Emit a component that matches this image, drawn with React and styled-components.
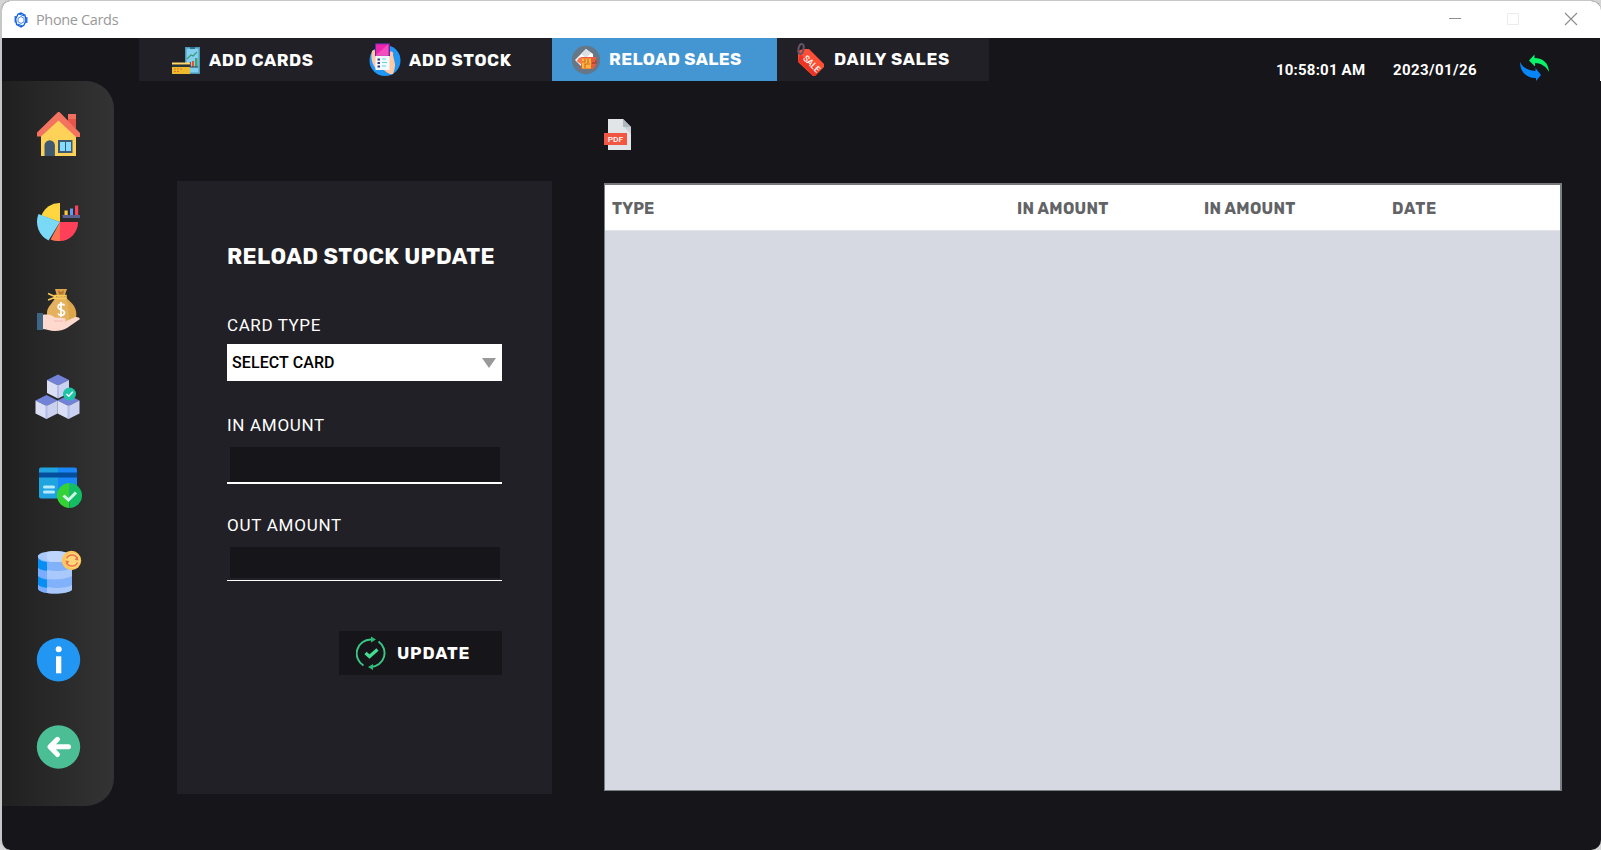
import React from "react";
import styled, { createGlobalStyle } from "styled-components";

const GlobalStyle = createGlobalStyle`
  * { box-sizing: border-box; }
  body { margin: 0; background: #d5d5d5; font-family: Roboto, "Liberation Sans", sans-serif; }
`;

const Window = styled.div`
  display: flex;
  flex-direction: column;
  width: 1601px;
  height: 850px;
  overflow: hidden;
  background: #16151a;
  border: solid #c6c8c8;
  border-width: 1px 0 0 2px;
  border-radius: 10px;
`;

const TitleBar = styled.header`
  display: flex;
  align-items: center;
  height: 37px;
  flex: none;
  padding: 0 23px 0 11px;
  background: #fff;
`;

const WindowTitle = styled.span`
  margin-left: 7px;
  color: #999;
  font: 400 14.5px/20px "Open Sans", sans-serif;
  letter-spacing: ${(p) => p.$spacing};
`;

const WindowControls = styled.div`
  display: flex;
  gap: 44px;
  margin: -2px 0 0 auto;
`;

const TopBar = styled.div`
  display: flex;
  height: 43px;
  flex: none;
  padding-left: 137px;
  border-right: 1px solid #fff;
`;

const Tab = styled.button`
  display: flex;
  align-items: center;
  width: ${(p) => p.$width}px;
  height: 43px;
  padding: 0 0 0 ${(p) => p.$inset}px;
  border: 0;
  background: ${(p) => (p.$active ? "#4496d2" : "#212026")};
`;

const Caption = styled.span`
  color: #fff;
  font: ${(p) => p.$weight || 700} ${(p) => p.$size || 17}px/20px Rubik, Roboto, sans-serif;
  letter-spacing: ${(p) => p.$spacing || 0}px;
  white-space: nowrap;
  margin-left: ${(p) => p.$gap || 0}px;
  padding-bottom: ${(p) => p.$lift || 0}px;
`;

const Status = styled.div`
  display: flex;
  align-items: flex-start;
  margin-left: auto;
  padding: 16px 50px 0 0;
`;

const Clock = styled.span`
  width: ${(p) => p.$width}px;
  margin-top: 6px;
  color: #fff;
  font: 700 15px/20px Roboto, sans-serif;
  letter-spacing: ${(p) => p.$spacing || 0}px;
  white-space: nowrap;
`;

const Body = styled.div`
  display: flex;
  align-items: flex-start;
`;

const Sidebar = styled.nav`
  display: flex;
  flex-direction: column;
  width: 112px;
  height: 725px;
  padding: 10px 0 0 32px;
  background: linear-gradient(90deg, #202020, #333);
  border-radius: 0 28px 28px 0;
`;

const NavItem = styled.a`
  display: flex;
  align-items: center;
  height: 87.5px;
`;

const FormPanel = styled.section`
  display: flex;
  flex-direction: column;
  width: 375px;
  height: 613px;
  margin: 100px 0 0 63px;
  padding: 62px 50px 0;
  background: #212026;
`;

const Heading = styled.h1`
  margin: 0 0 44px;
  color: #fff;
  font: 700 22px/28px Rubik, Roboto, sans-serif;
  letter-spacing: 0.4px;
  white-space: nowrap;
`;

const Field = styled.div`
  display: flex;
  flex-direction: column;
  height: 100px;
`;

const Label = styled.label`
  height: 20px;
  color: #fff;
  font: 400 17px/20px Roboto, sans-serif;
  letter-spacing: ${(p) => p.$spacing}px;
`;

const Select = styled.div`
  display: flex;
  align-items: center;
  justify-content: space-between;
  height: 37px;
  margin-top: 9px;
  padding: 0 6px 0 5px;
  background: #fff;
  color: #000;
  font: 500 16px/20px Roboto, sans-serif;
  letter-spacing: 0.1px;
`;

const Entry = styled.div`
  height: ${(p) => p.$height}px;
  margin-top: 11px;
  padding: 1px 2px ${(p) => p.$gap || 0}px 3px;
  border-bottom: ${(p) => p.$line}px solid #fff;

  &::before {
    content: "";
    display: block;
    height: 100%;
    background: #16151a;
  }
`;

const UpdateButton = styled.button`
  display: flex;
  align-items: center;
  align-self: flex-end;
  width: 163px;
  height: 44px;
  margin-top: 16px;
  padding: 0 0 0 17px;
  border: 0;
  background: #16151a;
`;

const Report = styled.section`
  display: flex;
  flex-direction: column;
  align-items: flex-start;
  padding: 38px 0 0 52px;
`;

const Table = styled.div`
  width: 958px;
  height: 608px;
  margin-top: 32px;
  border: solid #7a7f86;
  border-width: 2px 2px 1px 1px;
  border-top-color: #77777d;
  background: #d6d9e1;
`;

const TableHead = styled.div`
  display: grid;
  grid-template-columns: 405px 187px 188px 175px;
  align-items: center;
  height: 46px;
  padding-top: 2px;
  background: #fff;
  border-bottom: 1px solid #e3e4e8;
`;

const Column = styled.span`
  padding-left: 7px;
  color: #626366;
  font: 700 16px/20px Rubik, Roboto, sans-serif;
  letter-spacing: ${(p) => p.$spacing}px;
`;

const Icon = ({ w = 48, h = 48, children }) => (
  <svg width={w} height={h} viewBox={`0 0 ${w} ${h}`} style={{ display: "block", flex: "none" }} fill="none">
    {children}
  </svg>
);

const AppIcon = () => (
  <Icon w={16} h={16}>
    <path d="M5 2.2 8 1l4 2.2 1 5.6-2.2 4.5L8 15l-4.4-2.4L2.6 7z" stroke="#1764dc" strokeWidth="1.4" />
    <path d="M2.200 4v6.500M13.800 5v6M6 2l5.500 2M4.500 12l5 2" stroke="#1764dc" strokeWidth="1.300" />
    <path d="m8 4.500 3 1.800v3.500l-3 1.700-3-1.700V6.300z" stroke="#1764dc" strokeWidth=".8" />
  </Icon>
);

const HomeIcon = () => (
  <Icon>
    <path d="M34 3h8v15l-8-7z" fill="#e65549" />
    <path d="M34 3h8v5h-8z" fill="#f26f60" />
    <path d="M7 22 24 6l18 17v22H7z" fill="#fed159" />
    <path d="M24 1 3 21.500v4h4L24.500 9.500 42 26h4v-4L25.500 1z" fill="#f47260" />
    <path d="M10.500 45V34.500a5.200 5.200 0 0 1 10.400 0V45z" fill="#3f5a70" />
    <path d="M24 29h14.500v13H24z" fill="#3f5a70" />
    <path d="M26 31h5v9h-5zM32 31h5v9h-5z" fill="#84dbff" />
  </Icon>
);

const ChartIcon = () => (
  <Icon>
    <path d="M26 24V5A19 19 0 0 0 7.500 17.500z" fill="#ffd540" />
    <path d="M26 24 4.500 16a21 21 0 0 0 10 26.500z" fill="#7ad9f7" />
    <path d="M26 24 16.500 41.500A19 19 0 0 0 26 43z" fill="#ff7252" />
    <path d="M26 24V43A18.500 18.500 0 0 0 44 24z" fill="#ff4058" />
    <path d="M30.500 12.500h3.200v5h-3.200z" fill="#ffc83d" />
    <path d="M36 10.500h3v7h-3z" fill="#5f9bfa" />
    <path d="M41 7.500h3.200v10H41z" fill="#ff4058" />
    <path d="M28 17h18v3H29z" fill="#58618e" />
  </Icon>
);

const MoneyIcon = () => (
  <Icon>
    <path d="M21 3h12l-2.500 7 8 8c5 6 5 14 1 18H16c-5-7-3-14 1-18l6-8z" fill="#dda64b" />
    <path d="M23 10h7l4 8 1 16-6 3H16c-5-7-3-14 1-18z" fill="#e4b25f" />
    <path d="m24 4 3 2 3-2-1 6h-4z" fill="#b87530" />
    <path d="M21 9.500h11v3H21zM22 11l-8-3.500M22 11l-8 3" stroke="#f9ca55" strokeWidth="1.500" />
    <path d="M30.500 19.500c-1-2-6.500-2-6.500 1.500s6.500 2 6.500 5.500-5.500 3.500-6.500 1M27 16v15" stroke="#fff" strokeWidth="1.700" />
    <path d="M8 29c6-1 10 0 13 2.500l9 .5c2 0 2 3 0 4l9-4c3-2 6-1 7 1L33 42c-3 2-8 3-12 3-5 0-9-2-13-2z" fill="#ffd9ce" />
    <path d="M20 35h9" stroke="#f4b9ad" strokeWidth="1" />
    <path d="M3 27h6v17H3z" fill="#3e6583" />
  </Icon>
);

const Cube = ({ x, y }) => (
  <g transform={`translate(${x} ${y})`}>
    <path d="M0 5.500 11 0 22 5.500 11 11z" fill="#7182d8" />
    <path d="M0 5.500 11 11v13L0 18.500z" fill="#dadff6" />
    <path d="M11 11 22 5.500v13L11 24z" fill="#cbd1f0" />
    <path d="M10 10.500 12 10.500v13l-2 0z" fill="#b3bcea" />
  </g>
);

const CubesIcon = () => (
  <Icon>
    <Cube x={13} y={1.500} />
    <Cube x={1.500} y={22} />
    <Cube x={23.500} y={22} />
    <circle cx="35.500" cy="21" r="6.500" fill="#1cc5a5" />
    <path d="m32.500 21 2.300 2.300 4-4.600" stroke="#fff" strokeWidth="1.400" />
  </Icon>
);

const CardIcon = () => (
  <Icon>
    <path d="M7 6.500h17v31H7a2 2 0 0 1-2-2v-27a2 2 0 0 1 2-2z" fill="#20a4df" />
    <path d="M24 6.500h17a2 2 0 0 1 2 2v29H24z" fill="#1987f7" />
    <path d="M5 11.500h38v5H5z" fill="#044e9e" />
    <path d="M10.500 26h9M10.500 31h9" stroke="#b5eaff" strokeWidth="3" strokeLinecap="round" />
    <path d="M35.500 22a12.500 12.500 0 0 0 0 25z" fill="#35d235" />
    <path d="M35.500 22a12.500 12.500 0 0 1 0 25z" fill="#14bd63" />
    <path d="m29.500 34.500 5 4.500 7.500-7.500" stroke="#cff5ee" strokeWidth="3" />
  </Icon>
);

const DatabaseIcon = () => (
  <Icon>
    <path d="M4 7v34c2 6 32 6 34 0V7z" fill="#82b1fb" />
    <path d="M4 8h9v37c-5-1-9-2.500-9-5z" fill="#78adff" />
    <path d="M4 10c2 3 5 3.500 9 4v9c-5-1-9-2-9-4zM4 28c2 2 5 3 9 3.500v8.500c-5-1-9-2-9-4z" fill="#078ef5" />
    <path d="M13 22c9 2 20 1 25-2v8c-5 3-16 4-25 3zM13 39c9 2 20 1 25-2v5c-5 4-18 4-25 3z" fill="#a9c9fd" />
    <ellipse cx="21" cy="8.500" rx="17" ry="5.500" fill="#aac9fc" />
    <path d="M13 4c7-2 17-1 22 2v8H16c-3-2-4-5-3-10z" fill="#bed6fd" />
    <circle cx="37.500" cy="12.500" r="9.700" fill="#ffc65c" />
    <circle cx="38.500" cy="12.500" r="7.500" fill="#ffd979" />
    <path d="M32.500 10.500a6 6 0 0 1 11 0M43.500 14.500a6 6 0 0 1-11 0" stroke="#ed714e" strokeWidth="1.500" />
    <path d="m43 8 1.800 4.500-4-.5zM33 17l-1.800-4.500 4 .5z" fill="#ed714e" />
  </Icon>
);

const InfoIcon = () => (
  <Icon>
    <circle cx="24.500" cy="23.700" r="21.700" fill="#2196f3" />
    <circle cx="24.700" cy="13.300" r="3" fill="#fff" />
    <path d="M22 20.300h5.300v17H22z" fill="#fff" />
  </Icon>
);

const BackIcon = () => (
  <Icon>
    <circle cx="24.500" cy="24" r="21.700" fill="#4bbe95" />
    <path d="M34.500 23.800H16.500M23.500 16.300l-7.600 7.500 7.600 7.700" stroke="#fff" strokeWidth="5" strokeLinecap="round" strokeLinejoin="round" />
  </Icon>
);

const CardsTabIcon = () => (
  <Icon w={28} h={30}>
    <path d="M13 2h15v27H13z" fill="#4a9ab6" />
    <path d="M14.500 3.500h12v24h-12z" fill="#83cfef" />
    <path d="M18 2h5v2h-5z" fill="#326e8d" />
    <path d="m15 14 4-4 2 1 4-4" stroke="#3b9b73" strokeWidth="1.200" />
    <path d="M23 13h2.500v9H23z" fill="#43a269" />
    <path d="M17 17h2v5h-2z" fill="#a94442" />
    <path d="M20 16h2v6h-2z" fill="#e45342" />
    <path d="M0 18h18v11H0z" fill="#efb92e" />
    <path d="M0 17.500h18v2H0z" fill="#ffd96d" />
    <path d="M0 19.500h18V22H0z" fill="#26343c" />
    <path d="M2 24h8M2 26.500h6" stroke="#d8792d" strokeWidth="1" strokeDasharray="2 1" />
    <path d="M18 22h8" stroke="#263e4c" strokeWidth="1.200" />
  </Icon>
);

const StockTabIcon = () => (
  <Icon w={32} h={33}>
    <circle cx="16" cy="17.500" r="15.500" fill="#2196f3" />
    <path d="M3 8c2-2 3-1 4 1v17l-2-3c-3-5-3-10-2-15zM20 20V10c2-3 5-1 4 2l2 9c0 5-1 7-2 10-4 1-7-2-10-5z" fill="#ffc9a3" />
    <path d="M6.500.800h14V13h-14z" fill="#ee24ae" stroke="#52309c" />
    <path d="m7 12 12-10.500V13H7z" fill="#f865c6" opacity=".65" />
    <path d="M6.500 13h14v14h-14z" fill="#f3faff" />
    <path d="M8.500 16.500H11M8.500 20H11M8.500 23.500H11" stroke="#353781" strokeWidth="2" />
    <path d="M13 16h4M13 19.500h5M13 23h4" stroke="#5dd4dc" strokeWidth="1.200" />
  </Icon>
);

const ReloadTabIcon = () => (
  <Icon w={29} h={30}>
    <circle cx="14" cy="15" r="14.200" fill="#667787" />
    <path d="m3 15 11-11 7 5v5H10v8z" fill="#fff" />
    <path d="m9 9 5-5 5 4-5 5z" fill="#dedfe3" />
    <path d="M9 12h15v8l-3 4H9z" fill="#e85d40" />
    <path d="M5 16.500c0-3 4-6 6-3v7z" fill="#f57955" />
    <path d="M10 13.500h9v10h-9z" fill="#ffb83d" />
    <path d="M10 17h3v-3M13 23v-4h5M16 14v4" stroke="#c66225" strokeWidth="1.100" />
    <path d="M20 18h4v-3" stroke="#a94034" strokeWidth="1.300" />
  </Icon>
);

const SaleTabIcon = () => (
  <Icon w={28} h={34}>
    <path d="m1 8 5-2h6l15 15v3L18 33h-2L1 19z" fill="#ff4f36" />
    <path d="m1 18 15 15h2l4-4L3 11z" fill="#ec3521" />
    <ellipse cx="4" cy="6" rx="2.500" ry="5" stroke="#65536a" strokeWidth="2" transform="rotate(12 4 6)" />
    <text x="5.500" y="16" transform="rotate(45 5.500 16)" fill="#fff" fontFamily="Roboto, sans-serif" fontSize="9" fontWeight="500" textLength="20" lengthAdjust="spacingAndGlyphs">SALE</text>
  </Icon>
);

const RefreshIcon = () => (
  <Icon w={30} h={28}>
    <path d="M9 6.500 14.500.500v3.500C23 4 28.500 9 29 18 26 12.500 22 9.500 15 9v3.500z" fill="#08f36a" />
    <path d="M0 8c2.500 5 7 8.500 15.500 9v-3l5.500 7-5 6v-3C7 24.500 0 18 0 8z" fill="#0786f8" />
  </Icon>
);

const PdfIcon = () => (
  <Icon w={28} h={32}>
    <path d="M4 0h15l8 8v23H4z" fill="#e2e5e8" />
    <path d="M19 0v8h8z" fill="#b0b7bd" />
    <path d="m20 8 7 0v7z" fill="#cad1d8" />
    <path d="M0 14h23v12H0z" fill="#f15642" />
    <text x="3.700" y="23" fill="#fff" fontFamily="Roboto, sans-serif" fontSize="7.500" fontWeight="500" textLength="15.500" lengthAdjust="spacingAndGlyphs">PDF</text>
  </Icon>
);

const UpdateIcon = () => (
  <Icon w={32} h={34}>
    <path d="M7.500 29.500A14 14 0 0 1 15 3.500M22.500 5.500a14 14 0 0 1-7.500 25.500" stroke="#39c985" strokeWidth="1.900" />
    <path d="m15 .500 5 3-5 3zM17 28l-5 3 5 3z" fill="#2cba78" />
    <path d="m9.500 17 4 3.500 8-7" stroke="#43dd91" strokeWidth="3.200" />
  </Icon>
);

const MENU = [HomeIcon, ChartIcon, MoneyIcon, CubesIcon, CardIcon, DatabaseIcon, InfoIcon, BackIcon];

export default function App() {
  return (
    <Window>
      <GlobalStyle />
      <TitleBar>
        <AppIcon />
        <WindowTitle $spacing="-0.35px">Phone Cards</WindowTitle>
        <WindowControls>
          <Icon w={14} h={14}><path d="M1 6.500h12" stroke="#8f8f8f" /></Icon>
          <Icon w={14} h={14}><path d="M1.500 1.500h11v11h-11z" stroke="#ececec" /></Icon>
          <Icon w={14} h={14}><path d="m1 1 12 12M13 1 1 13" stroke="#8c8c8c" strokeWidth="1.100" /></Icon>
        </WindowControls>
      </TitleBar>
      <TopBar>
        <Tab $width={198} $inset={33}>
          <CardsTabIcon />
          <Caption $gap={9} $spacing={0.6}>ADD CARDS</Caption>
        </Tab>
        <Tab $width={215} $inset={32}>
          <StockTabIcon />
          <Caption $gap={8} $spacing={0.6}>ADD STOCK</Caption>
        </Tab>
        <Tab $active $width={225} $inset={20}>
          <ReloadTabIcon />
          <Caption $gap={8} $lift={2} $spacing={0.4}>RELOAD SALES</Caption>
        </Tab>
        <Tab $width={212} $inset={20}>
          <SaleTabIcon />
          <Caption $gap={9} $lift={2} $spacing={0.7}>DAILY SALES</Caption>
        </Tab>
        <Status>
          <Clock $width={117} $spacing={0.2}>10:58:01 AM</Clock>
          <Clock $width={127} $spacing={0.4}>2023/01/26</Clock>
          <RefreshIcon />
        </Status>
      </TopBar>
      <Body>
        <Sidebar>
          {MENU.map((Glyph, i) => (
            <NavItem key={i}><Glyph /></NavItem>
          ))}
        </Sidebar>
        <FormPanel>
          <Heading>RELOAD STOCK UPDATE</Heading>
          <Field>
            <Label $spacing={0.6}>CARD TYPE</Label>
            <Select>
              SELECT CARD
              <Icon w={14} h={10}><path d="M0 0h14L7 10z" fill="#999" /></Icon>
            </Select>
          </Field>
          <Field>
            <Label $spacing={0.7}>IN AMOUNT</Label>
            <Entry $height={38} $line={2} />
          </Field>
          <Field>
            <Label $spacing={0.75}>OUT AMOUNT</Label>
            <Entry $height={35} $line={1} $gap={2} />
          </Field>
          <UpdateButton>
            <UpdateIcon />
            <Caption $gap={9} $spacing={0.8}>UPDATE</Caption>
          </UpdateButton>
        </FormPanel>
        <Report>
          <PdfIcon />
          <Table>
            <TableHead>
              <Column $spacing={0.1}>TYPE</Column>
              <Column $spacing={0.3}>IN AMOUNT</Column>
              <Column $spacing={0.3}>IN AMOUNT</Column>
              <Column $spacing={0.8}>DATE</Column>
            </TableHead>
          </Table>
        </Report>
      </Body>
    </Window>
  );
}
